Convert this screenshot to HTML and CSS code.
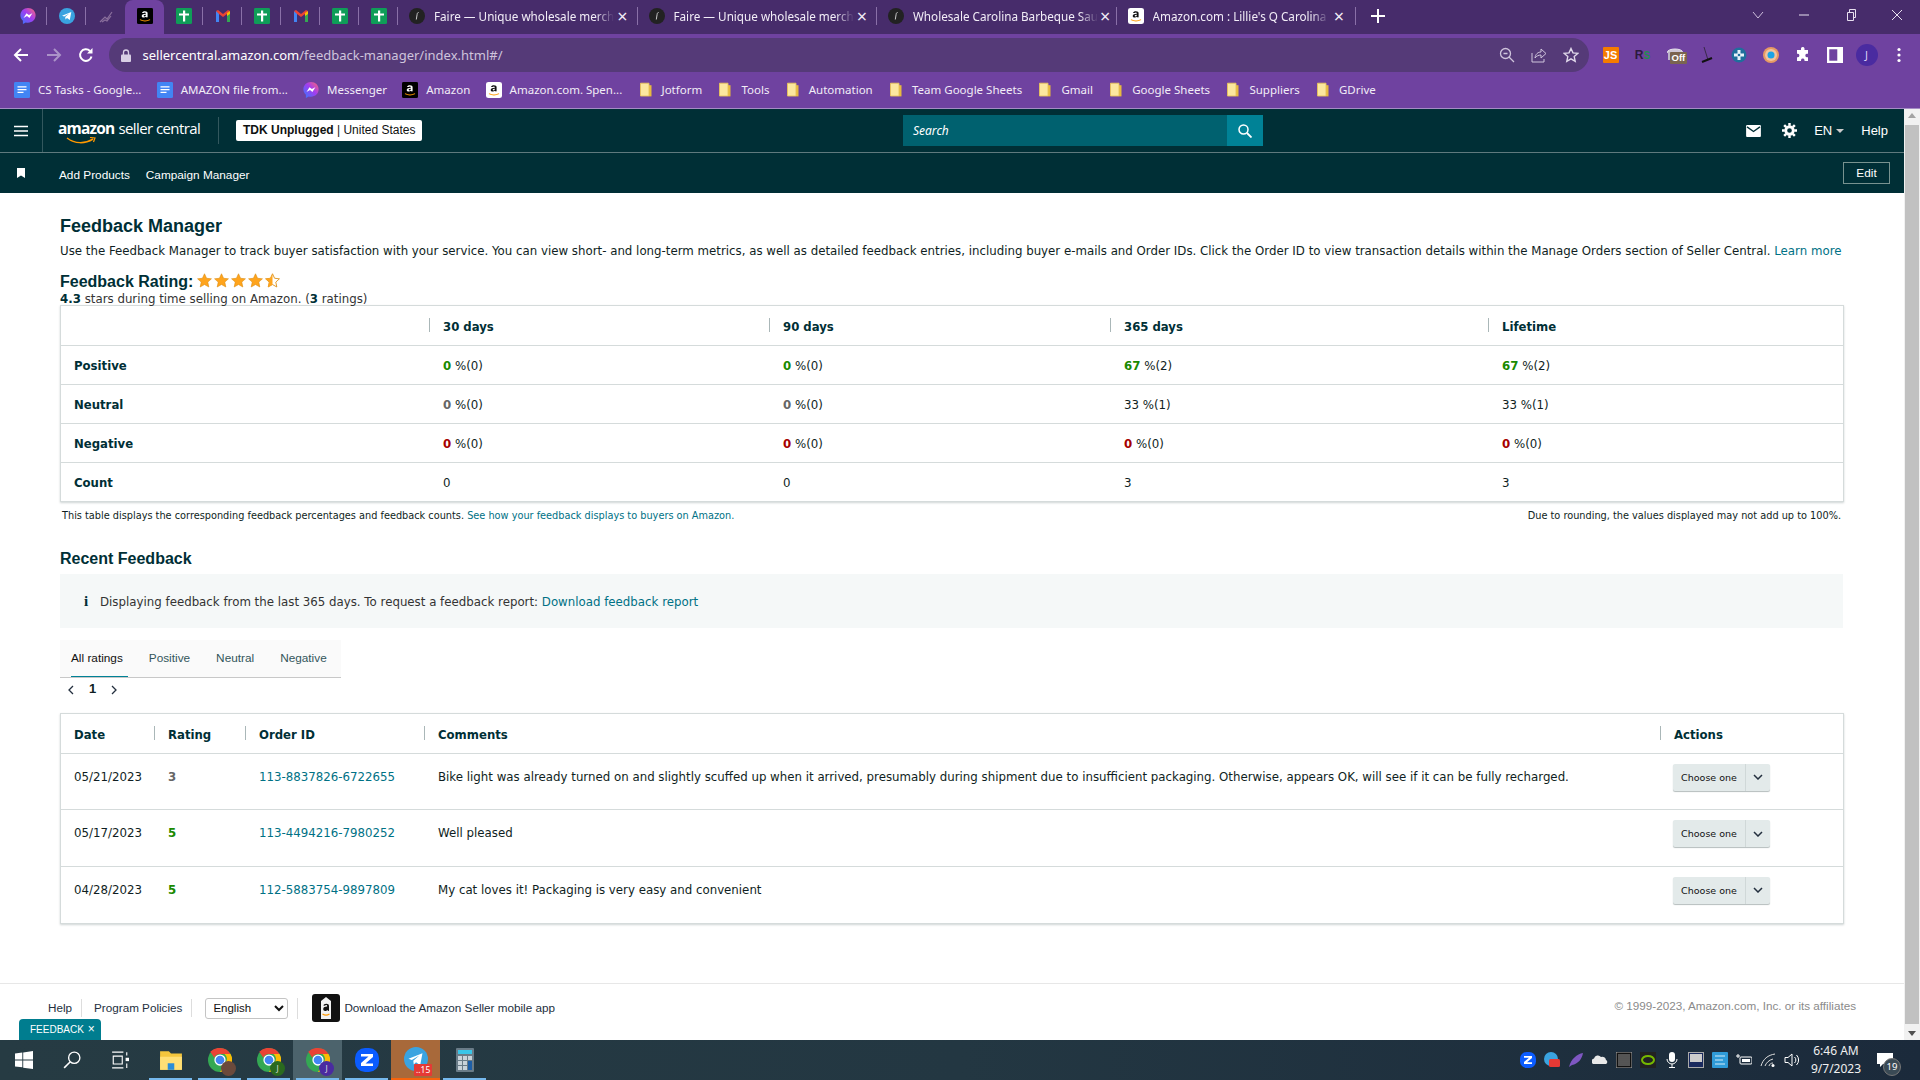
FILE: index.html
```html
<!DOCTYPE html>
<html lang="en">
<head>
    <meta charset="UTF-8">
    <title>Feedback Manager</title>
    <link rel="stylesheet" href="styles.css">
</head>
<body>
    <svg class="defs" width="0" height="0">
        <symbol id="i-sheets" viewBox="0 0 16 20" preserveAspectRatio="none">
            <rect width="16" height="20" rx="1.5" fill="#0f9d58"/>
            <path d="M7 3h2.200v14H7zM3 7h10v2.400H3z" fill="#fff"/>
        </symbol>
        <symbol id="i-gmail" viewBox="0 0 16 16">
            <path d="M1 14V3l3 2v9z" fill="#4285f4"/>
            <path d="M12 14V5l3-2v11z" fill="#34a853"/>
            <path d="M1 3l2-1 5 4 5-4 2 1-3 3-4 3-4-3z" fill="#ea4335"/>
            <path d="M12 5l3-2v3l-3 2z" fill="#fbbc04"/>
        </symbol>
        <symbol id="i-amazon" viewBox="0 0 16 20" preserveAspectRatio="none">
            <rect width="16" height="20" rx="1.5" fill="#000"/>
            <path d="M10.600 11.500V6.600c0-1.500-1-2.400-2.700-2.400-1.500 0-2.600.7-2.900 2l1.700.2c.1-.5.5-.8 1.100-.8.7 0 1 .4 1 1v.6c-2.200.1-4.100.6-4.100 2.700 0 1.300.9 2.100 2.100 2.100 1 0 1.600-.4 2.100-1l.8.9zM8.800 9c0 .8-.5 1.500-1.200 1.500-.6 0-.9-.4-.9-.9 0-1 1-1.200 2.100-1.200z" fill="#fff"/>
            <path d="M3 14.500c3 2 7 2 10 0" fill="none" stroke="#f90" stroke-width="1.200"/>
        </symbol>
        <symbol id="i-amazon-w" viewBox="0 0 16 20" preserveAspectRatio="none">
            <rect width="16" height="20" rx="2.500" fill="#fff"/>
            <path d="M10.600 11.500V6.600c0-1.500-1-2.400-2.700-2.400-1.500 0-2.600.7-2.900 2l1.700.2c.1-.5.5-.8 1.100-.8.7 0 1 .4 1 1v.6c-2.200.1-4.100.6-4.100 2.700 0 1.300.9 2.100 2.100 2.100 1 0 1.600-.4 2.100-1l.8.9zM8.800 9c0 .8-.5 1.500-1.200 1.500-.6 0-.9-.4-.9-.9 0-1 1-1.200 2.100-1.200z" fill="#111"/>
            <path d="M3 14.500c3 2 7 2 10 0" fill="none" stroke="#f90" stroke-width="1.200"/>
        </symbol>
        <symbol id="i-faire" viewBox="0 0 16 16">
            <circle cx="8" cy="8" r="8" fill="#222"/>
            <path d="M9.500 4.500c-1 0-1.200.8-1.400 2l-.8 5" fill="none" stroke="#ddd" stroke-width=".9"/>
        </symbol>
        <symbol id="i-messenger" viewBox="0 0 16 16">
            <defs>
                <linearGradient id="g-msg" x1="0" y1="1" x2="1" y2="0">
                    <stop offset="0" stop-color="#2f7bff"/>
                    <stop offset=".55" stop-color="#a33cf0"/>
                    <stop offset="1" stop-color="#ff6a70"/>
                </linearGradient>
            </defs>
            <path d="M8 0C3.600 0 .4 3.200.4 7.300c0 2.200.9 4.100 2.500 5.400V16l2.900-1.600c.7.2 1.400.3 2.200.3 4.400 0 7.600-3.200 7.600-7.400S12.400 0 8 0z" fill="url(#g-msg)"/>
            <path d="M3.500 10l3-4.700 2.400 1.800 3.500-1.900-3 4.700-2.400-1.800z" fill="#fff"/>
        </symbol>
        <symbol id="i-telegram" viewBox="0 0 16 16">
            <circle cx="8" cy="8" r="8" fill="#3aa3e0"/>
            <path d="M3 7.800l9.300-3.700-1.500 8-2.800-2-1.500 1.500-.3-2.500 4-3.500-5 3z" fill="#fff"/>
        </symbol>
        <symbol id="i-doc" viewBox="0 0 16 20" preserveAspectRatio="none">
            <rect width="16" height="20" rx="1.500" fill="#4285f4"/>
            <path d="M3.500 6h9M3.500 9.500h9M3.500 13h6" stroke="#fff" stroke-width="1.600"/>
        </symbol>
        <symbol id="i-folder" viewBox="-2 -1 16 20" preserveAspectRatio="none">
            <path d="M.5 17h11V3H9v14" fill="#e8bb3f"/>
            <path d="M.5 .5h8.500v16H.5z" fill="#fce79f" stroke="#e8c35a"/>
        </symbol>
        <symbol id="i-chrome" viewBox="0 0 32 32">
            <circle cx="16" cy="16" r="16" fill="#34a853"/>
            <path d="M16 0a16 16 0 0 1 14 8H16a8 8 0 0 0-7.500 5L3 5A16 16 0 0 1 16 0z" fill="#ea4335"/>
            <path d="M30 8a16 16 0 0 1-14 24l7-12a8 8 0 0 0-1-12z" fill="#fbbc04"/>
            <circle cx="16" cy="16" r="7.500" fill="#fff"/>
            <circle cx="16" cy="16" r="5.800" fill="#4285f4"/>
        </symbol>
        <symbol id="i-star" viewBox="0 0 16 16">
            <path d="M8 .8l2.200 4.800 5.200.6-3.900 3.500 1.100 5.200L8 12.300l-4.600 2.600 1.100-5.200L.6 6.200l5.200-.6z" fill="#ffa41c" stroke="#d98a0c" stroke-width=".6"/>
        </symbol>
        <symbol id="i-star-half" viewBox="0 0 16 16">
            <path d="M8 .8l2.200 4.800 5.200.6-3.900 3.500 1.100 5.200L8 12.300l-4.600 2.600 1.100-5.200L.6 6.200l5.200-.6z" fill="#fff" stroke="#d98a0c" stroke-width=".9"/>
            <path d="M8 .8v11.500l-4.600 2.600 1.100-5.200L.6 6.200l5.200-.6z" fill="#ffa41c"/>
        </symbol>
        <symbol id="i-chev" viewBox="0 0 10 6">
            <path d="M1 1l4 4 4-4" fill="none" stroke="#232f3e" stroke-width="1.500"/>
        </symbol>
    </svg>

    <!-- browser chrome -->
    <div class="tabstrip">
        <div class="pin sep"><svg class="ic16"><use href="#i-messenger"/></svg></div>
        <div class="pin sep"><svg class="ic16"><use href="#i-telegram"/></svg></div>
        <div class="pin"><svg class="ic16" viewBox="0 0 16 16"><path d="M2 14L7 9l2 2 5-7M4 14l3-2 2 1 4-5" fill="none" stroke="#8a6f9c" stroke-width="1.200"/></svg></div>
        <div class="pin pin-active"><svg class="ic16"><use href="#i-amazon"/></svg></div>
        <div class="pin sep"><svg class="ic16"><use href="#i-sheets"/></svg></div>
        <div class="pin sep"><svg class="ic16"><use href="#i-gmail"/></svg></div>
        <div class="pin sep"><svg class="ic16"><use href="#i-sheets"/></svg></div>
        <div class="pin sep"><svg class="ic16"><use href="#i-gmail"/></svg></div>
        <div class="pin sep"><svg class="ic16"><use href="#i-sheets"/></svg></div>
        <div class="pin sep"><svg class="ic16"><use href="#i-sheets"/></svg></div>
        <div class="tab sep"><svg class="ic16"><use href="#i-faire"/></svg><span class="tab-title">Faire — Unique wholesale merch</span><span class="tab-x">×</span></div>
        <div class="tab sep"><svg class="ic16"><use href="#i-faire"/></svg><span class="tab-title">Faire — Unique wholesale merch</span><span class="tab-x">×</span></div>
        <div class="tab sep"><svg class="ic16"><use href="#i-faire"/></svg><span class="tab-title">Wholesale Carolina Barbeque Sau</span><span class="tab-x">×</span></div>
        <div class="tab sep"><svg class="ic16"><use href="#i-amazon-w"/></svg><span class="tab-title">Amazon.com : Lillie's Q Carolina</span><span class="tab-x">×</span></div>
        <div class="newtab">
            <svg class="ic14" viewBox="0 0 14 14"><path d="M7 0v14M0 7h14" stroke="#fff" stroke-width="2"/></svg>
        </div>
        <div class="winctl">
            <svg class="ic12" viewBox="0 0 12 12"><path d="M1 3l5 6 5-6" fill="none" stroke="#cdbfdc"/></svg>
            <svg class="ic12" viewBox="0 0 12 12"><path d="M1 6h10" stroke="#e8e0f0"/></svg>
            <svg class="ic12" viewBox="0 0 12 12"><path d="M2.500 3.500h6v8h-6zM4.500 3.500v-3h6v8h-2" fill="none" stroke="#e8e0f0"/></svg>
            <svg class="ic12" viewBox="0 0 12 12"><path d="M1 1l10 10M11 1L1 11" stroke="#e8e0f0"/></svg>
        </div>
    </div>

    <div class="toolbar">
        <div class="nav-btn"><svg class="ic16" viewBox="0 0 16 16"><path d="M15 8H2M8 2L2 8l6 6" fill="none" stroke="#fff" stroke-width="2"/></svg></div>
        <div class="nav-btn"><svg class="ic16" viewBox="0 0 16 16"><path d="M1 8h13M8 2l6 6-6 6" fill="none" stroke="#ab93c8" stroke-width="2"/></svg></div>
        <div class="nav-btn"><svg class="ic16" viewBox="0 0 16 16"><path d="M13.500 9.500A5.800 5.800 0 1 1 12 4" fill="none" stroke="#fff" stroke-width="2"/><path d="M14.500 1v5.500H9z" fill="#fff"/></svg></div>
        <div class="omnibox">
            <svg class="lock" viewBox="0 0 10 13"><path d="M2.500 6V3.500a2.500 2.500 0 0 1 5 0V6" fill="none" stroke="#d8cfe4" stroke-width="1.300"/><rect y="5.500" width="10" height="7.500" rx="1" fill="#d8cfe4"/></svg>
            <span class="url"><b>sellercentral.amazon.com</b>/feedback-manager/index.html#/</span>
            <div class="omni-icons">
                <svg class="ic16" viewBox="0 0 16 16"><circle cx="6.500" cy="6.500" r="5" fill="none" stroke="#cfc4dc" stroke-width="1.300"/><path d="M4.500 6.500h4M10 10l5 5" stroke="#cfc4dc" stroke-width="1.300"/></svg>
                <svg class="ic16" viewBox="0 0 16 16"><path d="M1 6v9h12v-3" fill="none" stroke="#cfc4dc"/><path d="M4 11c.5-4 3-6 6-6V2l5 4.500-5 4.500V8c-2.500 0-4.500 1-6 3z" fill="none" stroke="#cfc4dc"/></svg>
                <svg class="ic16" viewBox="0 0 16 16"><path d="M8 1.500l2 4.400 4.800.5-3.600 3.200 1 4.700L8 11.900l-4.200 2.400 1-4.700L1.200 6.400 6 5.900z" fill="none" stroke="#e0d8ea" stroke-width="1.400"/></svg>
            </div>
        </div>
        <div class="extensions">
            <div class="ext"><span class="ext-js">JS</span></div>
            <div class="ext"><span class="ext-r">R<i>S</i></span></div>
            <div class="ext ext-off"><svg class="ic16" viewBox="0 0 16 16"><ellipse cx="8" cy="5" rx="7.500" ry="3" fill="#cfc8d8" stroke="#e8e4ee"/><path d="M1 5v8h14V5" fill="#bdb4c8"/></svg><span class="off-badge">Off</span></div>
            <div class="ext"><svg class="ic16" viewBox="0 0 16 16"><path d="M5 0l4 13" stroke="#3a2a4a"/><path d="M3 15l10-4" stroke="#111" stroke-width="2"/></svg></div>
            <div class="ext"><svg class="ic16" viewBox="0 0 16 16"><circle cx="8" cy="8" r="7.500" fill="#1f6f9c"/><path d="M6.500 3h3v3.500H13v3H9.500V13h-3V9.500H3v-3h3.500z" fill="#e8f4fa"/><circle cx="8" cy="8" r="1.300" fill="#1f6f9c"/></svg></div>
            <div class="ext"><svg class="ic16" viewBox="0 0 16 16"><circle cx="8" cy="8" r="8" fill="#e79a63"/><circle cx="8" cy="8" r="6" fill="#f1c3a0"/><circle cx="8" cy="8" r="3.500" fill="#1aa3e6"/></svg></div>
            <div class="ext"><svg class="ic16" viewBox="0 0 16 16"><path d="M6 1.500a1.800 1.800 0 0 1 3.500 0V3H13v3.800h-1.300a1.800 1.800 0 0 0 0 3.500H13V14H9.500v-1a1.800 1.800 0 0 0-3.500 0v1H2v-3.800h1a1.800 1.800 0 0 0 0-3.500H2V3h4z" fill="#fff"/></svg></div>
            <div class="ext"><svg class="ic16" viewBox="0 0 14 14"><rect width="14" height="14" fill="#fff"/><rect x="2" y="2" width="7" height="10" fill="#6f42a0"/></svg></div>
            <div class="ext"><span class="avatar">J</span></div>
            <div class="ext"><svg class="ic16" viewBox="0 0 16 16"><circle cx="8" cy="2.500" r="1.600" fill="#fff"/><circle cx="8" cy="8" r="1.600" fill="#fff"/><circle cx="8" cy="13.500" r="1.600" fill="#fff"/></svg></div>
        </div>
    </div>

    <div class="bookmarks">
        <a class="bm"><svg class="ic16"><use href="#i-doc"/></svg>CS Tasks - Google...</a>
        <a class="bm"><svg class="ic16"><use href="#i-doc"/></svg>AMAZON file from...</a>
        <a class="bm"><svg class="ic16"><use href="#i-messenger"/></svg>Messenger</a>
        <a class="bm"><svg class="ic16"><use href="#i-amazon"/></svg>Amazon</a>
        <a class="bm"><svg class="ic16"><use href="#i-amazon-w"/></svg>Amazon.com. Spen...</a>
        <a class="bm"><svg class="ic16"><use href="#i-folder"/></svg>Jotform</a>
        <a class="bm"><svg class="ic16"><use href="#i-folder"/></svg>Tools</a>
        <a class="bm"><svg class="ic16"><use href="#i-folder"/></svg>Automation</a>
        <a class="bm"><svg class="ic16"><use href="#i-folder"/></svg>Team Google Sheets</a>
        <a class="bm"><svg class="ic16"><use href="#i-folder"/></svg>Gmail</a>
        <a class="bm"><svg class="ic16"><use href="#i-folder"/></svg>Google Sheets</a>
        <a class="bm"><svg class="ic16"><use href="#i-folder"/></svg>Suppliers</a>
        <a class="bm"><svg class="ic16"><use href="#i-folder"/></svg>GDrive</a>
    </div>

    <!-- page -->
    <div class="viewport">
        <div class="page">
            <header class="topnav">
                <div class="burger"><svg class="ic14" viewBox="0 0 14 12"><path d="M0 1.500h14M0 6h14M0 10.500h14" stroke="#fff" stroke-width="1.600"/></svg></div>
                <div class="logo">
                    <span class="logo-amazon">amazon</span><span class="logo-sc">seller central</span>
                    <svg class="logo-smile" viewBox="0 0 30 8"><path d="M1 1c8 6 18 6 26 1" fill="none" stroke="#f90" stroke-width="1.500"/><path d="M24 .5l5 .5-1.500 4" fill="none" stroke="#f90" stroke-width="1.200"/></svg>
                </div>
                <div class="store"><b>TDK Unplugged</b> | United States</div>
                <div class="search">
                    <span class="search-text">Search</span>
                    <div class="search-btn"><svg class="ic14" viewBox="0 0 14 14"><circle cx="5.500" cy="5.500" r="4.500" fill="none" stroke="#fff" stroke-width="1.500"/><path d="M9 9l4.500 4.500" stroke="#fff" stroke-width="1.800"/></svg></div>
                </div>
                <div class="nav-right">
                    <svg class="ic-mail" viewBox="0 0 16 13"><rect width="16" height="13" rx="1" fill="#fff"/><path d="M1 2l7 5 7-5" fill="none" stroke="#002f36" stroke-width="1.500"/></svg>
                    <svg class="ic-gear" viewBox="0 0 16 16"><circle cx="8" cy="8" r="4" fill="none" stroke="#fff" stroke-width="3"/><path d="M8 0v3M8 13v3M0 8h3M13 8h3M2.300 2.300l2.200 2.200M11.500 11.500l2.200 2.200M13.700 2.300l-2.200 2.200M4.500 11.500l-2.200 2.200" stroke="#fff" stroke-width="2.600"/></svg>
                    <span class="lang">EN<i class="caret"></i></span>
                    <span class="nav-help">Help</span>
                </div>
            </header>
            <nav class="subnav">
                <svg class="bookmark" viewBox="0 0 8 10"><path d="M0 0h8v10L4 7.500 0 10z" fill="#fff"/></svg>
                <a>Add Products</a>
                <a>Campaign Manager</a>
                <span class="edit">Edit</span>
            </nav>

            <main class="content">
                <h1>Feedback Manager</h1>
                <p class="intro">Use the Feedback Manager to track buyer satisfaction with your service. You can view short- and long-term metrics, as well as detailed feedback entries, including buyer e-mails and Order IDs. Click the Order ID to view transaction details within the Manage Orders section of Seller Central. <a class="link">Learn more</a></p>
                <div class="rating-title">
                    <span>Feedback Rating:</span>
                    <span class="stars">
                        <svg class="star"><use href="#i-star"/></svg><svg class="star"><use href="#i-star"/></svg><svg class="star"><use href="#i-star"/></svg><svg class="star"><use href="#i-star"/></svg><svg class="star"><use href="#i-star-half"/></svg>
                    </span>
                </div>
                <p class="rating-sub"><b>4.3</b> stars during time selling on Amazon. (<b>3</b> ratings)</p>

                <table class="grid metrics">
                    <colgroup>
                        <col class="m1"><col class="m2"><col class="m3"><col class="m4"><col>
                    </colgroup>
                    <thead>
                        <tr><th></th><th class="div">30 days</th><th class="div">90 days</th><th class="div">365 days</th><th class="div">Lifetime</th></tr>
                    </thead>
                    <tbody>
                        <tr><th>Positive</th><td><b class="good">0</b> %(0)</td><td><b class="good">0</b> %(0)</td><td><b class="good">67</b> %(2)</td><td><b class="good">67</b> %(2)</td></tr>
                        <tr><th>Neutral</th><td><b class="mid">0</b> %(0)</td><td><b class="mid">0</b> %(0)</td><td>33 %(1)</td><td>33 %(1)</td></tr>
                        <tr><th>Negative</th><td><b class="bad">0</b> %(0)</td><td><b class="bad">0</b> %(0)</td><td><b class="bad">0</b> %(0)</td><td><b class="bad">0</b> %(0)</td></tr>
                        <tr><th>Count</th><td>0</td><td>0</td><td>3</td><td>3</td></tr>
                    </tbody>
                </table>
                <div class="table-note">
                    <span>This table displays the corresponding feedback percentages and feedback counts. <a class="link">See how your feedback displays to buyers on Amazon.</a></span>
                    <span>Due to rounding, the values displayed may not add up to 100%.</span>
                </div>

                <h2>Recent Feedback</h2>
                <div class="info">
                    <span class="info-i">i</span>
                    <span>Displaying feedback from the last 365 days. To request a feedback report: <a class="link">Download feedback report</a></span>
                </div>
                <div class="tabs">
                    <span class="rtab rtab-on">All ratings</span>
                    <span class="rtab">Positive</span>
                    <span class="rtab">Neutral</span>
                    <span class="rtab">Negative</span>
                </div>
                <div class="pager">
                    <svg class="pg" viewBox="0 0 6 10"><path d="M5 1L1 5l4 4" fill="none" stroke="#232f3e" stroke-width="1.300"/></svg>
                    <span>1</span>
                    <svg class="pg" viewBox="0 0 6 10"><path d="M1 1l4 4-4 4" fill="none" stroke="#232f3e" stroke-width="1.300"/></svg>
                </div>

                <table class="grid recent">
                    <colgroup>
                        <col class="r1"><col class="r2"><col class="r3"><col class="r4"><col>
                    </colgroup>
                    <thead>
                        <tr><th>Date</th><th class="div">Rating</th><th class="div">Order ID</th><th class="div">Comments</th><th class="div">Actions</th></tr>
                    </thead>
                    <tbody>
                        <tr>
                            <td>05/21/2023</td><td><b class="mid">3</b></td><td><a class="link">113-8837826-6722655</a></td>
                            <td>Bike light was already turned on and slightly scuffed up when it arrived, presumably during shipment due to insufficient packaging. Otherwise, appears OK, will see if it can be fully recharged.</td>
                            <td><div class="choose"><span>Choose one</span><i><svg class="ic10"><use href="#i-chev"/></svg></i></div></td>
                        </tr>
                        <tr>
                            <td>05/17/2023</td><td><b class="good">5</b></td><td><a class="link">113-4494216-7980252</a></td>
                            <td>Well pleased</td>
                            <td><div class="choose"><span>Choose one</span><i><svg class="ic10"><use href="#i-chev"/></svg></i></div></td>
                        </tr>
                        <tr>
                            <td>04/28/2023</td><td><b class="good">5</b></td><td><a class="link">112-5883754-9897809</a></td>
                            <td>My cat loves it! Packaging is very easy and convenient</td>
                            <td><div class="choose"><span>Choose one</span><i><svg class="ic10"><use href="#i-chev"/></svg></i></div></td>
                        </tr>
                    </tbody>
                </table>
            </main>

            <footer class="foot">
                <a class="foot-link">Help</a>
                <a class="foot-link">Program Policies</a>
                <span class="foot-select"><select class="lang-select"><option>English</option></select></span>
                <svg class="app-icon" viewBox="0 0 28 28"><rect width="28" height="28" rx="3" fill="#111"/><path d="M9 7l5-4 5 4v18H9z" fill="#f2f2f2"/><path d="M17 17v-5c0-1.500-1-2.300-2.800-2.300-1.500 0-2.500.7-2.800 1.800l1.600.2c.1-.5.5-.8 1.100-.8.7 0 1 .4 1 1v.5c-2 .1-3.900.6-3.900 2.600 0 1.200.8 2 2 2 1 0 1.500-.4 2-1l.8.8z" fill="#111"/><path d="M10.500 20c2 1.300 5 1.300 7 0" fill="none" stroke="#f90" stroke-width="1.200"/></svg>
                <span class="foot-app">Download the Amazon Seller mobile app</span>
                <span class="copyright">© 1999-2023, Amazon.com, Inc. or its affiliates</span>
            </footer>
            <div class="feedback-tab">FEEDBACK <span>×</span></div>
        </div>
        <div class="scrollbar">
            <i class="sb-up"></i>
            <div class="sb-thumb"></div>
            <i class="sb-down"></i>
        </div>
    </div>

    <!-- windows taskbar -->
    <div class="taskbar">
        <div class="task"><svg class="ic18" viewBox="0 0 16 16"><path d="M0 2.300l6.500-.9v6.100H0zM7.300 1.300L16 0v7.500H7.300zM0 8.400h6.500v6.100L0 13.700zM7.300 8.400H16V16l-8.700-1.200z" fill="#fff"/></svg></div>
        <div class="task"><svg class="ic18" viewBox="0 0 16 16"><circle cx="10" cy="6" r="5" fill="none" stroke="#fff" stroke-width="1.200"/><path d="M6.500 9.500L1 15" stroke="#fff" stroke-width="1.400"/></svg></div>
        <div class="task"><svg class="ic18" viewBox="0 0 16 16"><path d="M1 1h10M1 15h10M2 4.500h8v7H2z" fill="none" stroke="#fff"/><rect x="13" y="6" width="3" height="3" fill="#fff"/><path d="M14 1v3M14 11v4" stroke="#fff"/></svg></div>
        <div class="task on task-first"><svg class="ic-task" viewBox="0 0 22 20"><path d="M1 2h8l2 2h10v15H1z" fill="#f4c63d"/><path d="M1 7h20v12H1z" fill="#ffdf75"/><rect x="8" y="13" width="6" height="6" fill="#2a8dd8"/></svg></div>
        <div class="task on"><svg class="ic-task"><use href="#i-chrome"/></svg><span class="chrome-badge photo"></span></div>
        <div class="task on"><svg class="ic-task"><use href="#i-chrome"/></svg><span class="chrome-badge green">J</span></div>
        <div class="task on active"><svg class="ic-task"><use href="#i-chrome"/></svg><span class="chrome-badge purple">J</span></div>
        <div class="task on"><svg class="ic-task" viewBox="0 0 24 24"><rect width="24" height="24" rx="10" fill="#0b5cff"/><path d="M6 6h12v3l-7.500 6.500H18V18H6v-3l7.500-6.500H6z" fill="#fff"/></svg></div>
        <div class="task tg"><svg class="ic-task"><use href="#i-telegram"/></svg><span class="tg-badge">..15</span></div>
        <div class="task on"><svg class="ic-task" viewBox="0 0 18 24"><rect width="18" height="24" rx="1" fill="#6a7c88"/><rect x="2" y="2" width="14" height="4" fill="#39c5e8"/><path d="M2 8h4v4H2zM7 8h4v4H7zM2 13h4v4H2zM7 13h4v4H7zM2 18h4v4H2zM7 18h4v4H7zM12 8h4v4h-4z" fill="#c9d3da"/><rect x="12" y="13" width="4" height="9" fill="#1d5fa8"/></svg></div>
        <div class="tray">
            <svg class="ic-tray" viewBox="0 0 24 24"><rect width="24" height="24" rx="10" fill="#0b5cff"/><path d="M6 6h12v3l-7.500 6.500H18V18H6v-3l7.500-6.500H6z" fill="#fff"/></svg>
            <svg class="ic-tray" viewBox="0 0 16 16"><circle cx="7" cy="7" r="7" fill="#3aa3e0"/><rect x="5" y="7" width="11" height="8" rx="1.500" fill="#e53935"/></svg>
            <svg class="ic-tray" viewBox="0 0 16 16"><path d="M1 15C3 7 9 2 15 1c-1 6-5 11-11 12z" fill="#7e57c2"/></svg>
            <svg class="ic-tray" viewBox="0 0 16 16"><path d="M1 12a3 3 0 0 1 1-5.500A4 4 0 0 1 9 5a3.500 3.500 0 0 1 5 3 2.200 2.200 0 0 1 0 4z" fill="#e8e8e8"/></svg>
            <svg class="ic-tray" viewBox="0 0 16 16"><rect width="16" height="16" fill="#111" stroke="#aaa"/><path d="M2 3h12M2 5h12M2 7h12M2 9h12M2 11h12M2 13h12" stroke="#999"/></svg>
            <svg class="ic-tray" viewBox="0 0 16 16"><rect width="16" height="16" fill="#222"/><ellipse cx="8" cy="8" rx="6" ry="4" fill="none" stroke="#76b900" stroke-width="2"/></svg>
            <svg class="ic-tray" viewBox="0 0 16 16"><rect x="5" y="0" width="6" height="10" rx="3" fill="#fff"/><path d="M3 7a5 5 0 0 0 10 0M8 12v3M5 15.500h6" fill="none" stroke="#fff"/></svg>
            <svg class="ic-tray" viewBox="0 0 16 16"><rect x="0.500" y="0.500" width="15" height="15" fill="#1a2a5e" stroke="#aaa"/><rect x="2" y="2" width="12" height="8" fill="#ccc"/></svg>
            <svg class="ic-tray" viewBox="0 0 16 16"><rect width="16" height="16" rx="1" fill="#2f9bd8"/><path d="M3 4h10M3 8h8M3 12h10" stroke="#d4ecf8"/></svg>
            <svg class="ic-tray" viewBox="0 0 16 16"><rect x="4" y="5" width="12" height="7" rx="1" fill="none" stroke="#fff"/><rect x="6" y="7" width="8" height="3" fill="#fff"/><path d="M0 4h4M2 2v4" stroke="#fff"/></svg>
            <svg class="ic-tray" viewBox="0 0 16 16"><path d="M1 14C3 7 8 3 15 2M5 14c1-3 4-6 8-7M9 14c.5-2 2-3 4-3" fill="none" stroke="#ddd"/><circle cx="13" cy="13.500" r="1.500" fill="#fff"/></svg>
            <svg class="ic-tray" viewBox="0 0 16 16"><path d="M1 5.500h3L8 2v12L4 10.500H1z" fill="none" stroke="#fff"/><path d="M10.500 5a4 4 0 0 1 0 6M12.500 3a7 7 0 0 1 0 10" fill="none" stroke="#fff"/></svg>
            <div class="clock"><span>6:46 AM</span><span>9/7/2023</span></div>
            <div class="notif">
                <svg class="ic-tray" viewBox="0 0 16 14"><path d="M0 0h16v11H6l-3 3v-3H0z" fill="#fff"/></svg>
                <span class="notif-n">19</span>
            </div>
        </div>
    </div>
</body>
</html>
```

FILE: styles.css
```css
* {
    margin: 0;
    padding: 0;
    box-sizing: border-box;
}

html, body {
    width: 1920px;
    height: 1080px;
    overflow: hidden;
}

body {
    display: flex;
    flex-direction: column;
    font-family: "Noto Sans", "Liberation Sans", sans-serif;
    background: #fff;
    color: #0f1111;
}

a {
    text-decoration: none;
}

.defs {
    position: absolute;
}

.ic10 { width: 10px; height: 6px; }
.ic12 { width: 12px; height: 12px; }
.ic14 { width: 14px; height: 14px; }
.ic16 { width: 16px; height: 16px; flex-shrink: 0; }
.ic18 { width: 18px; height: 18px; }

/* browser tabs */
.tabstrip {
    height: 34px;
    background: #472c6b;
    display: flex;
    padding-left: 8px;
    flex-shrink: 0;
}

.pin {
    width: 39px;
    display: flex;
    align-items: center;
    justify-content: center;
    position: relative;
    padding-bottom: 2px;
}

.pin-active {
    background: #6f42a0;
    border-radius: 8px 8px 0 0;
}

.sep::after {
    content: "";
    position: absolute;
    right: 0;
    top: 7px;
    height: 18px;
    width: 1px;
    background: #8a70a8;
}

.tab {
    width: 239.500px;
    display: flex;
    align-items: center;
    padding: 0 9px 2px 11px;
    position: relative;
    color: #f2edf7;
    font-size: 11.700px;
}

.tab-title {
    flex: 1;
    margin-left: 9px;
    white-space: nowrap;
    -webkit-mask-image: linear-gradient(90deg, #000 90%, transparent);
    mask-image: linear-gradient(90deg, #000 90%, transparent);
}

.tab-x {
    font-size: 18px;
    width: 16px;
    text-align: center;
    margin-left: 2px;
    line-height: 16px;
}

.newtab {
    width: 43px;
    display: flex;
    align-items: center;
    justify-content: center;
    padding-bottom: 2px;
}

.winctl {
    margin-left: auto;
    display: flex;
    align-items: center;
    gap: 34.500px;
    padding: 0 17px 4px 0;
}

/* address bar */
.toolbar {
    height: 38px;
    background: #6f42a0;
    display: flex;
    align-items: center;
    padding: 4px 0 0 5px;
    flex-shrink: 0;
}

.nav-btn {
    width: 32.500px;
    display: flex;
    justify-content: center;
}

.omnibox {
    width: 1480px;
    height: 34px;
    margin-left: 6px;
    border-radius: 17px;
    background: #553a78;
    display: flex;
    align-items: center;
    padding: 0 10px 0 12px;
    font-size: 13px;
    color: #cfc4dc;
}

.lock {
    width: 10px;
    height: 13px;
    margin-right: 12px;
}

.url b {
    font-weight: 400;
    color: #fff;
}

.omni-icons {
    margin-left: auto;
    display: flex;
    gap: 16px;
}

.extensions {
    margin-left: 6px;
    display: flex;
}

.ext {
    width: 32px;
    display: flex;
    justify-content: center;
    align-items: center;
    position: relative;
}

.ext-js {
    width: 16px;
    height: 16px;
    background: #f57c00;
    color: #fff;
    font: bold 11px/16px "Liberation Sans", sans-serif;
    text-align: center;
    border-radius: 1px;
}

.ext-r {
    font: bold 12px/16px "Liberation Sans", sans-serif;
    color: #2b1a3d;
}

.ext-r i {
    color: #1e8e4e;
    font-style: normal;
    font-size: 10px;
}

.off-badge {
    position: absolute;
    left: 11px;
    top: 8px;
    background: #7a6450;
    color: #fff;
    font: bold 9.500px/12px "Liberation Sans", sans-serif;
    padding: 0 2px;
    border-radius: 1px;
}

.avatar {
    width: 22px;
    height: 22px;
    border-radius: 50%;
    background: #4a2ba0;
    color: #d9cdf5;
    font-size: 11px;
    line-height: 22px;
    text-align: center;
}

/* bookmarks */
.bookmarks {
    height: 37px;
    background: #6f42a0;
    border-bottom: 1px solid #a58cc4;
    display: flex;
    align-items: center;
    padding: 0 0 1px 14px;
    gap: 15.300px;
    flex-shrink: 0;
}

.bm {
    display: flex;
    align-items: center;
    gap: 8px;
    color: #f2edf7;
    font-size: 11.500px;
    white-space: nowrap;
}

/* page frame */
.viewport {
    flex: 1;
    display: flex;
    min-height: 0;
}

.page {
    width: 1904px;
    display: flex;
    flex-direction: column;
    position: relative;
}

.scrollbar {
    width: 16px;
    background: #f1f1f1;
    display: flex;
    flex-direction: column;
    align-items: center;
    padding-top: 4px;
    padding-bottom: 4px;
}

.sb-up {
    border: 4px solid transparent;
    border-bottom: 5px solid #a3a3a3;
    border-top: 0;
}

.sb-thumb {
    width: 14px;
    flex: 1;
    background: #c1c1c1;
    margin: 7px 0;
}

.sb-down {
    border: 4px solid transparent;
    border-top: 5px solid #505050;
    border-bottom: 0;
}

.topnav {
    height: 44px;
    background: #002f36;
    border-bottom: 1px solid #5f7a7e;
    display: flex;
    align-items: center;
    color: #fff;
}

.burger {
    width: 43px;
    height: 100%;
    border-right: 1px solid #33585e;
    display: flex;
    align-items: center;
    justify-content: center;
}

.logo {
    position: relative;
    margin-left: 15px;
    width: 161px;
    height: 27px;
    border-right: 1px solid #33585e;
    display: flex;
    align-items: baseline;
    white-space: nowrap;
}

.logo-amazon {
    font: bold 15.500px "Open Sans", sans-serif;
    letter-spacing: -.8px;
}

.logo-sc {
    font: 15px "Open Sans", sans-serif;
    margin-left: 4px;
    letter-spacing: -.6px;
}

.logo-smile {
    position: absolute;
    left: 8px;
    top: 20px;
    width: 30px;
    height: 8px;
}

.store {
    margin-left: 17px;
    background: #fff;
    color: #0f1111;
    border-radius: 2px;
    font: 12px/21px "Liberation Sans", sans-serif;
    padding: 0 7px;
}

.search {
    position: absolute;
    left: 903px;
    top: 6px;
    width: 360px;
    height: 31px;
    background: #00616f;
    display: flex;
    align-items: center;
}

.search-text {
    flex: 1;
    padding-left: 10px;
    font-size: 12px;
    font-style: italic;
}

.search-btn {
    width: 36px;
    height: 100%;
    background: #008296;
    display: flex;
    align-items: center;
    justify-content: center;
}

.nav-right {
    margin-left: auto;
    display: flex;
    align-items: center;
    font: 13px "Liberation Sans", sans-serif;
    padding-right: 16px;
}

.ic-mail { width: 15px; height: 12px; }
.ic-gear { width: 15px; height: 15px; margin-left: 21px; }

.lang {
    margin-left: 17px;
    display: flex;
    align-items: center;
}

.caret {
    margin-left: 4px;
    border: 4px solid transparent;
    border-top: 4px solid #ccc;
    border-bottom: 0;
}

.nav-help {
    margin-left: 17px;
}

.subnav {
    height: 40px;
    background: #002f36;
    display: flex;
    align-items: center;
    color: #fff;
    font: 11.800px "Liberation Sans", sans-serif;
    padding: 3px 0 0 17px;
}

.bookmark {
    width: 8px;
    height: 10px;
    margin-right: 34px;
    margin-top: -3px;
}

.subnav a {
    margin-right: 16px;
}

.edit {
    margin-left: auto;
    margin-right: 14px;
    width: 47px;
    height: 22px;
    margin-top: -4px;
    border: 1px solid #78928f;
    text-align: center;
    line-height: 20px;
}

/* content */
.content {
    flex: 1;
    padding: 21px 61px 0 60px;
    font-family: "DejaVu Sans", "Liberation Sans", sans-serif;
    font-size: 11.800px;
    color: #0f1e22;
}

h1 {
    font: bold 18px/24px "Liberation Sans", sans-serif;
    color: #002f36;
}

.intro {
    margin-top: 4px;
    line-height: 18px;
    white-space: nowrap;
}

.link {
    color: #007185;
}

.rating-title {
    display: flex;
    align-items: center;
    margin-top: 12px;
    font: bold 16px/20px "Liberation Sans", sans-serif;
    color: #002f36;
}

.stars {
    display: flex;
    margin-left: 4px;
    margin-top: -4px;
}

.star {
    width: 15px;
    height: 15px;
    margin-right: 2px;
}

.rating-sub {
    line-height: 15px;
    padding-top: 1px;
    margin-top: -1px;
    margin-bottom: -1px;
    color: #333;
}

.rating-sub b {
    color: #002f36;
}

.grid {
    width: 1782px;
    margin-left: 1px;
    border-collapse: collapse;
    table-layout: fixed;
    background: #fff;
    box-shadow: 0 0 0 1px #d5dbdb, 0 1px 2px 1px #cfd5d5;
    text-align: left;
}

.grid th, .grid td {
    border-top: 1px solid #d5dbdb;
    padding: 3px 0 0 14px;
    position: relative;
}

.grid tr > :first-child {
    padding-left: 13px;
}

.grid thead th {
    border-top: 0;
}

.grid th {
    font-size: 11.700px;
    font-weight: 700;
    color: #002f36;
}

.div::before {
    content: "";
    position: absolute;
    left: 0;
    top: 12px;
    height: 14px;
    width: 1px;
    background: #aab7b8;
}

.metrics {
    height: 195px;
}

.metrics thead tr { height: 39px; }
.metrics tbody tr { height: 39px; }
.m1 { width: 368px; }
.m2 { width: 340px; }
.m3 { width: 341px; }
.m4 { width: 378px; }

.good { color: #1a8a00; }
.mid { color: #666; }
.bad { color: #a60000; }

.table-note {
    display: flex;
    justify-content: space-between;
    width: 1783px;
    padding: 8px 2px 0;
    font-size: 9.750px;
    line-height: 14px;
}

h2 {
    font: bold 16px/20px "Liberation Sans", sans-serif;
    color: #002f36;
    margin-top: 26px;
}

.info {
    margin-top: 5px;
    width: 1783px;
    height: 54px;
    background: #f5f8f8;
    display: flex;
    align-items: center;
    padding: 1px 0 0 24px;
    color: #333;
}

.info-i {
    font: bold 15px "Liberation Serif", serif;
    color: #002f36;
    width: 16px;
}

.tabs {
    margin-top: 12px;
    width: 281px;
    height: 38px;
    background: #fafafa;
    border-bottom: 1px solid #c8c8c8;
    display: flex;
    padding-left: 11px;
    gap: 26px;
    font: 11.800px "Liberation Sans", sans-serif;
    color: #33565b;
}

.rtab {
    line-height: 37px;
    height: 37px;
    white-space: nowrap;
}

.rtab-on {
    color: #111;
    border-bottom: 1px solid #008296;
    padding-right: 5px;
    margin-right: -5px;
}

.pager {
    display: flex;
    align-items: center;
    height: 18px;
    padding: 3px 0 0 8px;
    gap: 15px;
    font: bold 13px "Liberation Sans", sans-serif;
    margin-bottom: 18px;
}

.pg {
    width: 6px;
    height: 10px;
    margin-top: 2px;
}

.recent thead tr { height: 39px; }
.recent tbody tr { height: 56.500px; }
.recent tbody td { vertical-align: top; padding-top: 16px; }
.recent tbody td:last-child { padding-top: 10px; padding-left: 13px; }
.r1 { width: 93px; }
.r2 { width: 91px; }
.r3 { width: 179px; }
.r4 { width: 1236px; }

.choose {
    width: 97px;
    height: 27px;
    background: #e3eaea;
    border-radius: 2px;
    box-shadow: 0 1px 1px #b5bdbd;
    display: flex;
    align-items: center;
    font-size: 9.500px;
    color: #111;
}

.choose span {
    width: 73px;
    text-align: center;
    border-right: 1px solid #d0d8d8;
    line-height: 27px;
}

.choose i {
    flex: 1;
    display: flex;
    justify-content: center;
}

/* footer */
.foot {
    height: 57px;
    border-top: 1px solid #e7e7e7;
    display: flex;
    align-items: center;
    font: 11.700px "Liberation Sans", sans-serif;
    color: #232f3e;
    padding: 0 0 8px 48px;
}

.foot-link {
    padding-right: 9px;
    margin-right: 12px;
    border-right: 1px solid #ddd;
    line-height: 18px;
}

.foot-select {
    padding-right: 9px;
    border-right: 1px solid #ddd;
    margin-left: 1px;
    margin-right: 14px;
    height: 21px;
}

.lang-select {
    width: 83px;
    height: 21px;
    font: 11.500px "Liberation Sans", sans-serif;
    padding-left: 3px;
    border: 1px solid #c4c4c4;
    border-radius: 3px;
    background: #fff;
    color: #111;
}

.app-icon {
    width: 28px;
    height: 28px;
}

.foot-app {
    margin: -2px 0 0 4px;
}

.copyright {
    margin-left: auto;
    margin-right: 48px;
    color: #8a8a8a;
    margin-top: -5px;
}

.feedback-tab {
    position: absolute;
    left: 19px;
    bottom: 0;
    width: 82px;
    height: 21px;
    background: #007d8f;
    border-radius: 4px 4px 0 0;
    color: #fff;
    font: 10px/20px "Liberation Sans", sans-serif;
    padding-left: 11px;
}

.feedback-tab span {
    font-size: 12px;
    margin-left: 1px;
}

/* taskbar */
.taskbar {
    height: 40px;
    background: linear-gradient(90deg, #263b43, #233742 50%, #1b2a3b);
    display: flex;
    flex-shrink: 0;
    color: #fff;
}

.task {
    width: 48px;
    display: flex;
    align-items: center;
    justify-content: center;
    position: relative;
    flex-shrink: 0;
}

.task-first {
    margin-left: 2px;
}

.task.on, .task.tg {
    width: 49px;
}

.ic-task { width: 24px; height: 24px; }

.task.on::after {
    content: "";
    position: absolute;
    left: 3px;
    right: 3px;
    bottom: 0;
    height: 2px;
    background: #76b9ed;
}

.task.active {
    background: #4c636c;
}

.task.tg {
    background: #a8693a;
    border-bottom: 2px solid #f7630c;
}

.chrome-badge {
    position: absolute;
    left: 26px;
    top: 21px;
    width: 15px;
    height: 15px;
    border-radius: 50%;
    font-size: 8px;
    line-height: 15px;
    text-align: center;
    color: #ddd;
}

.chrome-badge.photo { background: #6b4a3c; }
.chrome-badge.green { background: #2a6a1f; }
.chrome-badge.purple { background: #4a2ba0; }

.tg-badge {
    position: absolute;
    left: 23px;
    top: 24px;
    background: #e53935;
    color: #fff;
    font-size: 8.500px;
    line-height: 12px;
    padding: 0 2px;
    border-radius: 1px;
}

.tray {
    margin-left: auto;
    display: flex;
    align-items: center;
    gap: 8px;
    padding-right: 23px;
}

.ic-tray {
    width: 16px;
    height: 16px;
}

.clock {
    display: flex;
    flex-direction: column;
    align-items: center;
    font-size: 12px;
    line-height: 18px;
    color: #f0f0f0;
    width: 54px;
    margin-left: 1px;
}

.notif {
    margin-left: 6px;
    position: relative;
    width: 20px;
    display: flex;
}

.notif-n {
    position: absolute;
    left: 6px;
    top: 6px;
    width: 18px;
    height: 18px;
    border-radius: 50%;
    background: #3a4a55;
    border: 1px solid #777;
    font-size: 9.500px;
    line-height: 16px;
    text-align: center;
}
```
